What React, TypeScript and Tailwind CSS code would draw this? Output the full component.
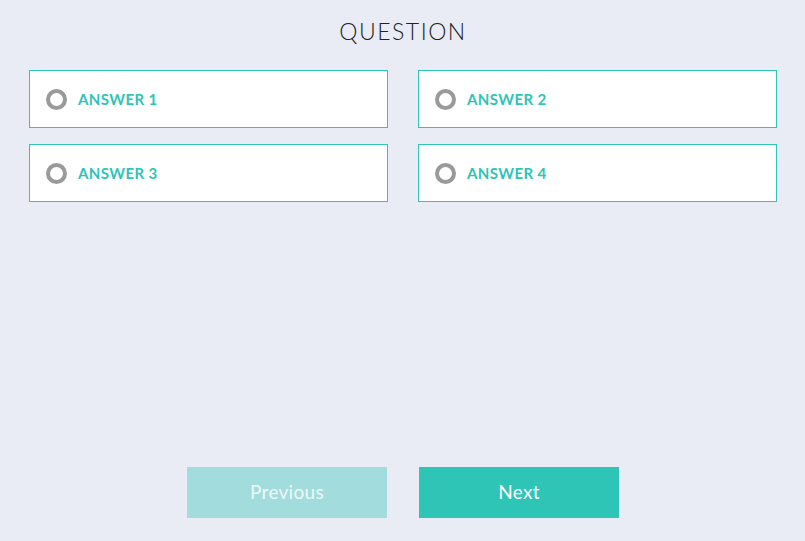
const answers = ["ANSWER 1", "ANSWER 2", "ANSWER 3", "ANSWER 4"];

const AnswerCard = ({label}: {label: string}) => {
    return (
        <label className="flex h-[58px] cursor-pointer items-center gap-[11px] border border-[#2ec4b6] bg-white pl-[16px]">
            <span className="block h-[21px] w-[21px] rounded-full border-[4px] border-[#9a9a9a]"></span>
            <span className="text-[15px] font-bold tracking-[0.4px] text-[#2ec4b6]">{label}</span>
        </label>
    );
};

export default function App() {
    return (
        <div
            className="flex h-[541px] w-full flex-col bg-[#e9ecf4] pl-[29px] pr-[28px]"
            style={{fontFamily: "Lato, 'Open Sans', sans-serif"}}
        >
            <h1 className="pt-[17px] text-center text-[23px] font-light leading-[28px] tracking-[1.5px] text-[#222]">
                QUESTION
            </h1>
            <div className="mt-[25px] grid grid-cols-2 gap-x-[30px] gap-y-[16px]">
                {answers.map((a) => (
                    <AnswerCard key={a} label={a}/>
                ))}
            </div>
            <div className="mt-auto mb-[23px] flex justify-center gap-[32px]">
                <button
                    type="button"
                    className="h-[51px] w-[200px] bg-[#a2dcdc] text-[19px] tracking-[0.3px] text-[#eef8f8]"
                >
                    Previous
                </button>
                <button
                    type="button"
                    className="h-[51px] w-[200px] bg-[#2ec5b6] text-[19px] tracking-[0.3px] text-white"
                >
                    Next
                </button>
            </div>
        </div>
    );
}
